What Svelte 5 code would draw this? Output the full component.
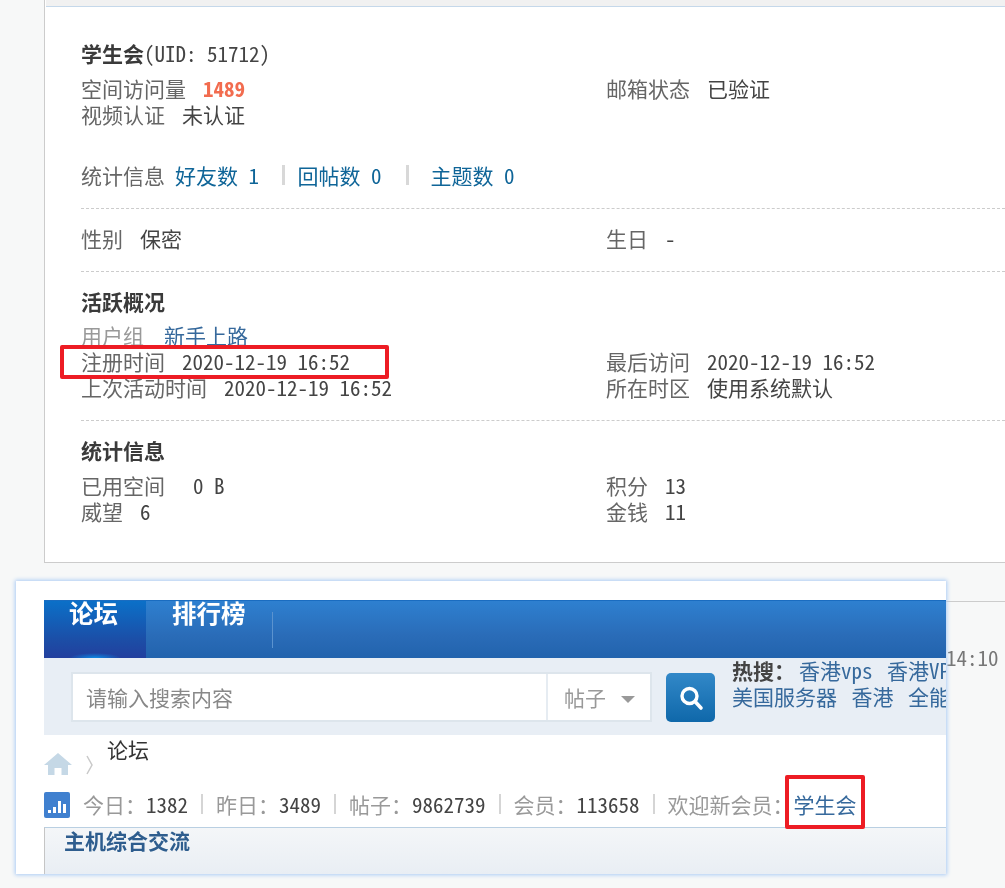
<script>
  const hot = ["香港vps", "香港VPS"];
  const hot2 = ["美国服务器", "香港", "全能"];
  const stats = [
    ["今日\uFF1A", "1382"],
    ["昨日\uFF1A", "3489"],
    ["帖子\uFF1A", "9862739"],
    ["会员\uFF1A", "113658"]
  ];
</script>

<div class="page">
  <div class="bg-time">
    <div class="bg-line"></div>
    <div class="time">14:10</div>
  </div>

  <section class="card">
    <div class="strip"></div>
    <div class="body">
      <h2 class="title"><b>学生会</b>(UID: 51712)</h2>
      <div class="grid two">
        <div><span class="k">空间访问量</span><b class="hits">1489</b></div>
        <div><span class="k">邮箱状态</span><span class="v">已验证</span></div>
        <div><span class="k">视频认证</span><span class="v">未认证</span></div>
      </div>
      <div class="counts">
        <span class="k2">统计信息</span>
        <span class="blue">好友数 1</span><i class="pipe pipe-a"></i><span class="blue">回帖数 0</span><i class="pipe pipe-b"></i><span class="blue">主题数 0</span>
      </div>
      <div class="grid two gender">
        <div><span class="k">性别</span><span class="v">保密</span></div>
        <div><span class="k">生日</span><span class="v">-</span></div>
      </div>
      <h3 class="sub active">活跃概况</h3>
      <div class="line group"><span class="k muted">用户组</span><span class="link">新手上路</span></div>
      <div class="grid two">
        <div><span class="k">注册时间</span><span class="v">2020-12-19 16:52</span></div>
        <div><span class="k">最后访问</span><span class="v">2020-12-19 16:52</span></div>
        <div><span class="k">上次活动时间</span><span class="v">2020-12-19 16:52</span></div>
        <div><span class="k">所在时区</span><span class="v">使用系统默认</span></div>
      </div>
      <h3 class="sub stat">统计信息</h3>
      <div class="grid two">
        <div><span class="k">已用空间</span><span class="v used">0 B</span></div>
        <div><span class="k">积分</span><span class="v">13</span></div>
        <div><span class="k">威望</span><span class="v">6</span></div>
        <div><span class="k">金钱</span><span class="v">11</span></div>
      </div>
    </div>
    <div class="mark mark-reg"></div>
  </section>

  <section class="shot">
    <nav class="nav">
      <a class="tab on">论坛</a>
      <a class="tab">排行榜</a>
      <i class="nav-sep"></i>
    </nav>
    <div class="search">
      <div class="box">
        <span class="ph">请输入搜索内容</span>
        <span class="type">帖子<i class="caret"></i></span>
      </div>
      <div class="go">
        <svg width="28" height="28" viewBox="0 0 28 28" fill="none" stroke="#fff">
          <circle cx="12.500" cy="12" r="7.500" stroke-width="3.400" />
          <path d="M18.500 18l5.500 6" stroke-width="3.600" stroke-linecap="round" />
        </svg>
      </div>
      <div class="hot">
        <div><b>热搜{"\uFF1A"}</b>{#each hot as h}<a>{h}</a>{/each}</div>
        <div>{#each hot2 as h}<a>{h}</a>{/each}</div>
      </div>
    </div>
    <div class="crumb">
      <svg class="home" width="28" height="22" viewBox="0 0 28 22">
        <path d="M14 0L28 12h-4v10h-6.500v-7h-7v7H4V12H0z" fill="#c5d8e6" />
      </svg>
      <svg class="chev" width="8" height="20" viewBox="0 0 8 20" fill="none">
        <path d="M1 1l5 9-5 9" stroke="#c9c9c9" stroke-width="1.500" />
      </svg>
      <span class="here">论坛</span>
    </div>
    <div class="stats">
      <svg class="chart" width="26" height="26" viewBox="0 0 26 26">
        <rect width="26" height="26" rx="2" fill="#4080cf" />
        <rect x="4" y="18" width="3" height="3" fill="#fff" />
        <rect x="9" y="15" width="3" height="6" fill="#fff" />
        <rect x="14" y="9" width="3" height="12" fill="#fff" />
        <rect x="19" y="12" width="3" height="9" fill="#fff" />
      </svg>
      {#each stats as s}
        <span class="lab">{s[0]}</span><span class="num">{s[1]}</span><i class="bar"></i>
      {/each}
      <span class="lab">欢迎新会员{"\uFF1A"}</span><a class="new">学生会</a>
    </div>
    <div class="panel"><b>主机综合交流</b></div>
  </section>
  <div class="mark mark-new"></div>
</div>

<style>
  :global(body) {
    margin: 0;
    background: #f7f8f8;
  }
  .page {
    position: relative;
    width: 1005px;
    height: 888px;
    overflow: hidden;
    background: #f7f8f8;
    color: #666;
    font: 21px/26px "Noto Sans Mono CJK SC", "Noto Sans CJK SC", monospace;
    font-feature-settings: "zero" 1;
    filter: blur(0.35px);
  }
  b, h2, h3 { font-weight: 700; }
  a { color: inherit; text-decoration: none; }
  i { display: block; }

  .bg-time { position: absolute; left: 946px; top: 601px; width: 59px; }
  .bg-line { height: 1px; background: #ccc; }
  .time { margin-top: 42px; font-size: 21px; line-height: 26px; color: #777; }

  .card {
    position: relative;
    margin-left: 44px;
    height: 563px;
    box-sizing: border-box;
    background: #fff;
    border-left: 1px solid #ccc;
    border-bottom: 1px solid #ccc;
  }
  .strip {
    height: 6px;
    background: #f1f1f1;
    border-bottom: 1px solid #c5d8ea;
    margin-left: 1px;
  }
  .body { padding: 33px 0 0 36px; }
  .title { margin: 0 0 9px; font-size: 21px; line-height: 26px; color: #444; font-weight: 400; }
  .title b { color: #3a3a3a; }
  .grid.two { display: grid; grid-template-columns: 525px 1fr; }
  .k { margin-right: 17px; color: #666; }
  .v { color: #444; }
  .hits { color: #f26c4f; }
  .used { margin-left: 11px; }
  .counts {
    display: flex;
    align-items: center;
    margin-top: 35px;
    padding-bottom: 20px;
    border-bottom: 1px dashed #ccc;
    height: 26px;
    color: #666;
  }
  .k2 { margin-right: 10px; }
  .blue { color: #0f6598; white-space: pre; }
  .pipe { width: 3px; height: 20px; background: #d8d8d8; }
  .pipe-a { margin: 0 12.500px 0 23px; }
  .pipe-b { margin: 0 22px 0 24px; }
  .gender {
    padding: 16px 0 20px;
    border-bottom: 1px dashed #ccc;
  }
  .sub { margin: 0; font-size: 21px; line-height: 26px; color: #3a3a3a; }
  .active { margin-top: 16px; }
  .line { margin-top: 8px; }
  .muted { color: #999; margin-right: 20px; }
  .link { color: #36699c; }
  .group + .grid {
    padding-bottom: 20px;
    border-bottom: 1px dashed #ccc;
  }
  .stat { margin-top: 16px; margin-bottom: 9px; }

  .mark {
    position: absolute;
    box-sizing: border-box;
    border: 4px solid #ed1c24;
    border-radius: 2px;
  }
  .mark-reg { left: 15px; top: 345px; width: 329px; height: 34px; }
  .mark-new { left: 785px; top: 775px; width: 80px; height: 54px; }

  .shot {
    position: absolute;
    left: 16px;
    top: 581px;
    width: 930px;
    height: 293px;
    overflow: hidden;
    box-sizing: border-box;
    padding: 19px 0 0 28px;
    background: #fff;
    box-shadow: 0 0 4px 1px #a9cbf5;
  }
  .nav {
    display: flex;
    height: 58px;
    background: linear-gradient(#2e80d0, #2a6cb8 60%, #2263ad);
    border-top: 1px solid #1a6cc0;
    box-sizing: border-box;
    color: #fff;
    font-size: 24.500px;
    font-weight: 700;
    line-height: 24px;
  }
  .tab { padding: 0 26px; }
  .tab.on {
    padding: 0 0 0 25px;
    width: 102px;
    box-sizing: border-box;
    background:
      radial-gradient(ellipse 26px 5px at 50% 100%, #0d8ae6, transparent),
      linear-gradient(#0b70c8, #1c4da6 70%, #223f9e);
  }
  .nav-sep { width: 1px; height: 36px; margin-top: 11px; background: #5b93cf; }
  .search {
    display: flex;
    height: 77px;
    background: #e8eef5;
    align-items: flex-start;
  }
  .box {
    display: flex;
    margin: 14px 0 0 27px;
    width: 581px;
    height: 50px;
    box-sizing: border-box;
    background: #fff;
    border: 2px solid #dde5ec;
    color: #888;
    line-height: 46px;
  }
  .ph { flex: 1; padding-left: 13px; }
  .type {
    display: flex;
    align-items: center;
    width: 104px;
    box-sizing: border-box;
    padding-left: 16px;
    border-left: 2px solid #e6ecf2;
    color: #999;
  }
  .caret {
    margin: 4px 0 0 15px;
    border: 7px solid transparent;
    border-top: 7px solid #999;
    border-bottom: 0;
  }
  .go {
    display: grid;
    place-items: center;
    width: 49px;
    height: 49px;
    margin: 15px 0 0 14px;
    border-radius: 5px;
    background: linear-gradient(#3288c8, #0f68aa);
  }
  .hot {
    margin: -1px 0 0 17px;
    white-space: nowrap;
    color: #36699c;
    flex: 0 0 214px;
    overflow: hidden;
  }
  .hot b { color: #444; margin-right: 4px; }
  .hot a { margin-right: 14.500px; }
  .crumb { position: relative; height: 56px; }
  .home { position: absolute; left: 0; top: 18px; }
  .chev { position: absolute; left: 42px; top: 20px; }
  .here { position: absolute; left: 63px; top: 1px; color: #333; }
  .stats {
    display: flex;
    align-items: center;
    height: 26px;
    white-space: nowrap;
  }
  .chart { margin-right: 13px; margin-top: 1px; }
  .lab { color: #999; }
  .num { color: #444; }
  .bar { width: 2px; height: 20px; margin: 0 13px; background: #d5d5d5; }
  .new { color: #36699c; }
  .panel {
    margin-top: 10px;
    height: 47px;
    box-sizing: border-box;
    padding-left: 19px;
    border-top: 1px solid #b9cfe2;
    border-left: 1px solid #c5c5c5;
    background: linear-gradient(#f4f6f8, #e9eef4);
    color: #2e5d8e;
    line-height: 24px;
  }
</style>
